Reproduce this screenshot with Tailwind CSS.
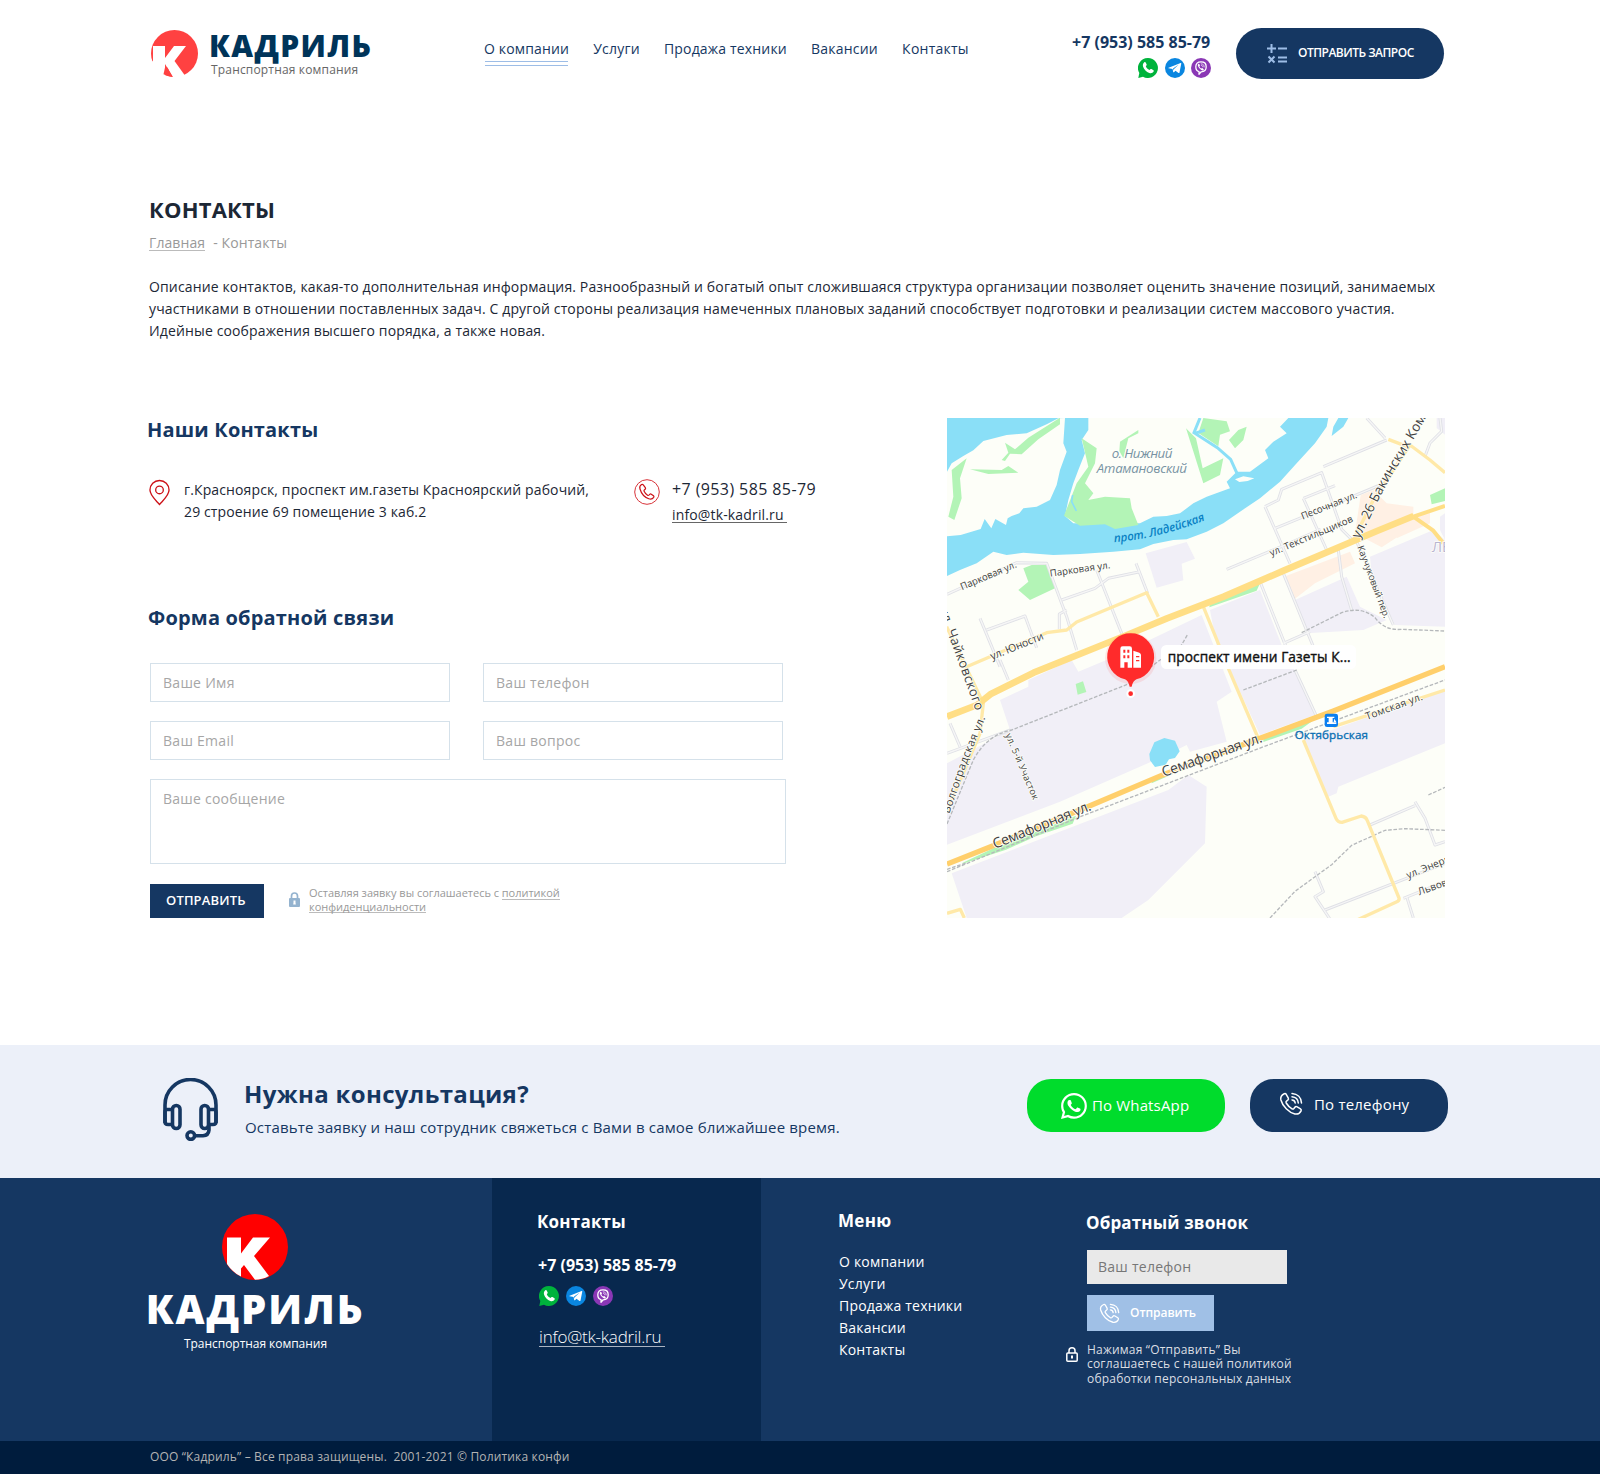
<!DOCTYPE html>
<html lang="ru">
<head>
<meta charset="utf-8">
<title>Кадриль — Контакты</title>
<script src="https://cdn.jsdelivr.net/npm/@tailwindcss/browser@4"></script>
</head>
<body class="bg-white font-['Open_Sans','Noto_Sans',sans-serif] text-[14px] text-[#1c2735]">
<svg class="hidden">
  <defs>
    <symbol id="wa" viewBox="0 0 20 20"><path fill="#00b33c" d="M10 0a10 10 0 1 1-5 18.7L.3 20l1-5A10 10 0 0 1 10 0Z"/><path fill="#fff" d="M6.3 4.2c.5-.4 1-.3 1.3.2l1 1.9c.2.5.1.9-.2 1.2l-.6.7c.7 1.7 1.900 2.900 3.700 3.700l.8-.7c.4-.3.8-.4 1.200-.1l1.900 1.200c.5.3.5.8.2 1.300-1 1.600-2.600 2-4.300 1.400-3-1-5.200-3.200-6.200-6.200-.5-1.800-.2-3.500 1.200-4.600Z"/></symbol>
    <symbol id="tg" viewBox="0 0 20 20"><circle cx="10" cy="10" r="10" fill="#0a86e0"/><path fill="#fff" d="M3.600 9.700 15.600 5c.5-.2.8.1.7.6l-1.800 8.900c-.1.600-.6.700-1 .4l-3-2.200-1.600 1.500c-.3.300-.6.200-.7-.2l-.6-3-3.900-.8c-.5-.1-.5-.4-.1-.5Zm4.500.9.500 2 .4-1.700 4.800-4.300Z"/></symbol>
    <symbol id="vb" viewBox="0 0 20 20"><circle cx="10" cy="10" r="10" fill="#8a37b5"/><path fill="none" stroke="#fff" stroke-width="1.300" stroke-linejoin="round" d="M10 3.800c3.800 0 5.200 1.400 5.200 5s-1.400 5-5 5L8 16.200v-2.600c-2.300-.5-3.200-2-3.200-4.800 0-3.600 1.400-5 5.200-5Z"/><path fill="#fff" d="M7.400 5.900c.5-.3.800 0 1 .4l.5.9c.1.300 0 .6-.5 1 .3 1.200 1 2 2.100 2.400.3-.5.700-.6 1-.4l1 .7c.4.300.4.600.1 1-.6.800-1.400.7-2.300.200a7.200 7.200 0 0 1-3.300-4c-.3-1 0-1.800.4-2.200Z"/><path fill="none" stroke="#fff" stroke-width=".7" stroke-linecap="round" d="M10.200 5.800c1.900.1 3 1.200 3 3.200M10.400 7.300c.9.100 1.300.6 1.400 1.500"/></symbol>
    <symbol id="call" viewBox="0 0 24 24"><g fill="none" stroke="currentColor" stroke-linecap="round" stroke-linejoin="round"><path d="M5.300 1.700C2.500 3 1.200 5 1.900 8c1.600 6 8 12.800 14 14 3 .5 5-.6 6.200-3.100.3-.8.1-1.500-.6-2l-3.300-2.100c-.9-.5-1.700-.4-2.300.4l-1 1.300c-.5.600-1.200.7-1.900.3-2.500-1.500-4.300-3.300-5.800-5.800-.4-.7-.3-1.400.3-1.900l1.300-1c.8-.6.900-1.400.4-2.300L7.200 2.300c-.5-.7-1.200-.9-1.900-.6Z"/><path d="M13 1.500c5.500.3 9.300 4 9.500 9.500M13 4.700c3.700.3 6 2.600 6.300 6.300M13 7.900c2 .2 3 1.200 3.200 3.100"/></g></symbol>
  </defs>
</svg>

<header class="flex h-[186px] items-start pl-[151px]">
  <svg class="mt-[30px] h-[47px] w-[47px]" viewBox="0 0 47 47"><circle cx="23.500" cy="23.500" r="23.500" fill="#ff4141"/><path fill="#fff" d="M2 16h12v12l9-12h12L23.500 31 35 47H22l-8-13v13H0V32l2-1Z"/><path fill="#ff4141" d="M14 37.500 12.500 44.300q4 2.300 9 2.700l-5-9.500Z"/></svg>
  <div class="mt-[30px] ml-[11px] w-[164px] whitespace-nowrap">
    <div class="text-[30px]/[32px] font-extrabold tracking-[1.350px] text-[#003459]">КАДРИЛЬ</div>
    <div class="pl-[2px] text-[12px]/[16px] tracking-[.17px] text-[#666]">Транспортная компания</div>
  </div>
  <nav class="mt-[39px] ml-[111px] flex gap-[24.200px] text-[14px]/[20px] whitespace-nowrap text-[#153762]">
    <a class="flex flex-col"><span class="tracking-[.15px]">О компании</span><i class="mx-px mt-[2px] h-[5px] border-y border-[#9dbde6]"></i></a>
    <a class="tracking-[.2px]">Услуги</a><a class="tracking-[.17px]">Продажа техники</a><a class="tracking-[.2px]">Вакансии</a><a class="tracking-[.25px]">Контакты</a>
  </nav>
  <div class="mt-[32px] ml-auto w-[140px]">
    <div class="text-[16px]/[20px] font-bold whitespace-nowrap text-[#153762]">+7 (953) 585 85-79</div>
    <div class="mt-[6px] mr-px flex justify-end gap-[6.500px]"><svg class="h-5 w-5"><use href="#wa"/></svg><svg class="h-5 w-5"><use href="#tg"/></svg><svg class="h-5 w-5"><use href="#vb"/></svg></div>
  </div>
  <button class="mt-[28px] mr-[156px] ml-[24px] flex h-[51px] w-[208px] items-center rounded-full bg-[#153762] pl-[31px] whitespace-nowrap text-white">
    <svg class="h-5 w-5" viewBox="0 0 20 20" fill="none" stroke="#9dbde6" stroke-width="2"><path d="M0 4.500h9M4.500 0v9M11 4.500h9M1.500 12.500l6 6M7.500 12.500l-6 6M11 13.500h9M11 17.500h9"/></svg>
    <span class="-mt-px ml-[11px] text-[12px]/[18px] font-semibold tracking-[-.51px]">ОТПРАВИТЬ ЗАПРОС</span>
  </button>
</header>

<main class="h-[859px] pl-[147px]">
  <h1 class="pt-[9px] pl-[2px] text-[22px]/[28px] font-bold tracking-[.21px] whitespace-nowrap">КОНТАКТЫ</h1>
  <div class="mt-[10px] flex gap-[8px] pl-[2px] text-[14px]/[20px] tracking-[.1px] whitespace-nowrap text-[#999]"><a class="h-[18px] border-b border-[#bbb]">Главная</a><span>- Контакты</span></div>
  <p class="mt-[23px] pl-[2px] text-[14px]/[22px] tracking-[.137px] whitespace-nowrap">Описание контактов, какая-то дополнительная информация. Разнообразный и богатый опыт сложившаяся структура организации позволяет оценить значение позиций, занимаемых<br>участниками в отношении поставленных задач. С другой стороны реализация намеченных плановых заданий способствует подготовки и реализации систем массового участия.<br>Идейные соображения высшего порядка, а также новая.</p>

  <div class="mt-[76px] flex">
    <section class="w-[800px] whitespace-nowrap">
      <h2 class="text-[20px]/[24px] font-bold tracking-[.18px] text-[#153762]">Наши Контакты</h2>
      <div class="mt-[37px] flex items-start">
        <svg class="ml-[1.500px] h-[27px] w-[21px]" viewBox="0 0 22 27" fill="none" stroke="#cc1117" stroke-width="1.400"><path d="M11 .9A10 10 0 0 0 1 11c0 5.500 5 9.500 10 15 5-5.500 10-9.500 10-15A10 10 0 0 0 11 .9Z"/><circle cx="11" cy="10.800" r="4"/></svg>
        <p class="ml-[14.500px] w-[405px] text-[14px]/[22px] tracking-[.125px]">г.Красноярск, проспект им.газеты Красноярский рабочий,<br>29 строение 69 помещение 3 каб.2</p>
        <svg class="ml-[45px] h-[26px] w-[26px] text-[#cc1117]" viewBox="0 0 26 26"><circle cx="13" cy="13" r="12.300" fill="none" stroke="#d8343a" stroke-width="1"/><path fill="none" stroke="currentColor" stroke-width="1.200" d="M7.600 5.500C5.800 6.600 5.400 8.200 6 10c1.300 4.500 4.500 8.200 8.800 9.800 2 .7 3.800.2 4.900-1.400.4-.7.300-1.200-.2-1.600l-2.200-1.600c-.6-.4-1.100-.4-1.600.1l-.8.900c-.4.400-.8.400-1.300.1-1.500-1-2.700-2.300-3.500-4-.3-.5-.2-.9.200-1.300l.9-.7c.5-.5.500-1 .1-1.600L9.300 5.900c-.4-.6-1-.8-1.700-.4Z"/></svg>
        <div class="ml-[12px]"><div class="text-[16px]/[20px] tracking-[.4px]">+7 (953) 585 85-79</div><a class="mt-[6px] block h-[18px] w-[115px] border-b border-[#666] text-[14px]/[20px] tracking-[.15px]">info@tk-kadril.ru</a></div>
      </div>
      <h2 class="mt-[83px] pl-px text-[20px]/[24px] font-bold tracking-[.19px] text-[#153762]">Форма обратной связи</h2>
      <form class="mt-[33px] ml-[3px] text-[14px]/[20px] text-[#a6a6a6]">
        <div class="grid grid-cols-[300px_300px] gap-x-[33px] gap-y-[19px] tracking-[.28px]">
          <div class="flex h-[39px] items-center border border-[#d5e1ea] pl-[12px]">Ваше Имя</div>
          <div class="flex h-[39px] items-center border border-[#d5e1ea] pl-[12px]">Ваш телефон</div>
          <div class="flex h-[39px] items-center border border-[#d5e1ea] pl-[12px]">Ваш Email</div>
          <div class="flex h-[39px] items-center border border-[#d5e1ea] pl-[12px]">Ваш вопрос</div>
        </div>
        <div class="mt-[19px] h-[85px] w-[636px] border border-[#d5e1ea] pt-[9px] pl-[12px] tracking-[.24px]">Ваше сообщение</div>
        <div class="mt-5 flex items-start">
          <div class="flex h-[34px] w-[114px] items-center bg-[#153762] pb-[2px] pl-[16px] text-[13px]/[20px] font-semibold tracking-[.15px] text-white">ОТПРАВИТЬ</div>
          <svg class="mt-[8px] ml-[25px] h-[15px] w-[11px]" viewBox="0 0 11 15"><path d="M2.500 7V4a3 3 0 0 1 6 0v3" fill="none" stroke="#94b3cf" stroke-width="1.700"/><rect y="6" width="11" height="9" rx="1" fill="#94b3cf"/><path d="M4.500 8.500h2v2l.3 2H4.200l.3-2Z" fill="#fff"/></svg>
          <p class="mt-[2px] ml-[9px] text-[11px]/[14px] tracking-[-.02px] text-[#999]">Оставляя заявку вы соглашаетесь с <a class="inline-block h-[14px] border-b border-[#bbb] align-top">политикой</a><br><a class="inline-block h-[13px] border-b border-[#bbb] align-top">конфиденциальности</a></p>
        </div>
      </form>
    </section>

    <svg class="h-[500px] w-[498px]" viewBox="21 24 1494 1500" font-family="'Open Sans','Noto Sans',sans-serif">
      <rect x="21" y="24" width="1494" height="1500" fill="#fdfef8"/>
      <!-- residential and industrial blocks -->
      <g fill="#f1eff7">
        <path d="M617 430 740 396l25 50-40 15 5 50-80 22Z"/>
        <path d="M810 600 960 540l65 165-180 75-20-100Z"/>
        <path d="M1065 570 1220 500l40 90 80 40-70 30-170 10-25-60Z"/>
        <path d="m1290 440 190-80 35 30v260l-150-5-70-150Z"/>
        <path d="M180 870 265 830v-20l130-60 20 35 120-50 250-120 90 230-45 30 30 120-110 30-10-20-60 30-320 140-340 130V1060l190-100Z"/>
        <path d="m870 780 160-75 95 210-165 60Z"/>
        <path d="m1090 990 425-150v160l-320 130-5 20-25 10Z"/>
        <path d="m35 1390 650-250 60-45 55 35-5 170-170 170-80 54H80Z"/>
        <path d="M1490 24h25v50l-25-20ZM1500 320l15-10v80l-15-30Z"/>
      </g>
      <g fill="#fff0e4"><path d="M1032 500 1230 425l15 35-120 60-65 50Z"/><path d="M1262 255 1300 240l40 40 80 10v60l-95 62-80-42Z"/><path d="m1370 350 100-50v40l-100 45Z"/></g>
      <!-- river and islands -->
      <path fill="#8adff7" d="M21 24h1144l-5 26-35 50-55 60-50 55-60 50-60 40-50 35-50 25-60 23-40 2-60 12-40 16-80 7-100 7-80 3-90-7-50 7-40-10-50 35-50 20-39 18ZM1195 24h30l-15 26-35 28 5-28Z"/>
      <path fill="#fdfef8" d="m21 185 14-25 35-22 30-17 30-28 70-18 60-5 60-27 35-18 20-1-5 76 10 25-20 55-10 45-20 45-40 20-40 5-12 15-23 8-12 7-5 20-32-18-12 28-20-28-12 30-60 18-45 4ZM445 24h600l-25 26 20 20-40 25-25 25 10 25-55 40h-40l-30 30 10 20-70 25-40 20-40 30-40 8-40 2-40 20H400l-25-22 10-48 15-50 15-40 20-50-10-40 20-30ZM885 208l25-9 33 6-20 8-25 3Z"/>
      <g fill="#b3f4b6">
        <path d="m35 180 45-35-20 60 5 60-22 65-18-10 15-60ZM90 178l95 2 20-12 30 20-90 4ZM185 150l20-22-10-30 30 20 40-35 95-60v20l-65 45-50 45-35-2-15 22Z"/>
        <path d="m425 85 45 30-5 45-30 60 25 30-15 20 50-10 75 5 5 30 20 50-70 12-30-14-75 4-48-30 38-97 35-50ZM738 55l30 30 20 90 62-30-10 50-50 25-25-80ZM790 24l70 10 10 30-30 10-5 35-60-40ZM895 60l25-10-10 40-25 25-18-25ZM540 95l55-35v10l-30 15-15 60 10 18-22-40Z"/>
        <path d="m250 475 25-10h45l25 70-75 35-35-30 30-25ZM1470 255l45-20v38l-40 10ZM810 578l150-58-10 22-142 50ZM407 822l22-8 10 32-26 8ZM68 1358l100-47 120-46 120-48-10 24-110 38-90 40-130 42ZM635 1112l60-32-10 18-50 22ZM970 988l165-68-50 36-115 40Z"/>
      </g>
      <path d="M780 24 762 68l70 45 40 35 18 40M795 60l-30 10" fill="none" stroke="#8adff7" stroke-width="9"/>
      <path d="m398 255-3 20 14 28" fill="none" stroke="#8adff7" stroke-width="5"/>
      <path fill="#8adff7" d="m628 1032 15-35 30-13 32 8 14 32-14 20-18 4-10 16-32 7-15-20Z"/>
      <!-- minor streets -->
      <defs><path id="st" d="M21 553 230 458l90 2 60 160 30 100M365 570l100-35 40-30 95-20M470 480l75 190M588 460l35 90M120 625l60 145M140 660l115-42 35 95M380 600l-22 12v45M860 478l180-75 102-45M975 290l75 170M1030 490l90 220M975 290l40-20 10-32 120-50 60 170 30 30M1090 265l70 155M1090 265l95-38M1005 355l160-65 155-65M1150 170l190-80M1250 395l110 250M1195 420l10 80 30 100M1280 24l55 60M1500 24l5 40-35 35-15 40M1065 780l65 140M960 515l80 200M1030 700l80-35M180 750l25 60M30 940l30 70M21 1030l190-70M1290 1245l135-58M1425 1175l30 50 30 80 30-10M1125 1385l25 60-25 15 60 90M1155 1500l360-140M1390 1465l125-50M1400 1460l20 64"/></defs>
      <use href="#st" fill="none" stroke="#dfe0e6" stroke-width="9" stroke-linejoin="round"/>
      <use href="#st" fill="none" stroke="#f6f6f6" stroke-width="4" stroke-linejoin="round"/>
      <!-- rail lines -->
      <g fill="none" stroke="#b5b8bb" stroke-width="4" stroke-dasharray="11 5">
        <path d="M21 1242 100 1050q40-75 115-90L570 820l90-70 50-20 32-55M1085 668l120-60q60-20 100 15 30 40 80 35l130 5M910 840l160-60M21 1385l400-165 550-210 544-200M21 1378l60-20M990 1524l75-80 110-80 60-58 100-45 60-5 120 5M1465 1155l50-23"/>
      </g>
      <!-- avenues -->
      <path fill="none" stroke="#ffe9a8" stroke-width="10" stroke-linejoin="round" d="m80 770 70-30 170-72 60-8 30-24 210-88 35 72M790 590l75 185 92 215M1090 990l98 235q5 12 18 12l58-19q14 2 18 14l95 232q2 8-8 12l-120 55M1180 950l335-110M1240 390l60-120 110-165 60 45 45 38M1345 88l65 25M20 650l110 230-10 90-99 235M21 1510l40-12 12 26"/>
      <g fill="none" stroke="#ffde85" stroke-linejoin="round"><path stroke-width="20" d="m21 920 90-35 40-32 130-65 280-113 120-50 170-65 180-78 280-119 110-45"/><path stroke-width="12" d="m1420 320 60 42 30 38M1420 320l95-32"/></g>
      <path fill="none" stroke="#ffcf6b" stroke-width="16" d="m21 1362 144-57 285-118 220-93 290-109 220-82 335-133"/>
      <!-- place names -->
      <g fill="#404040" stroke="#fdfef8" stroke-width="5" paint-order="stroke" stroke-linejoin="round" font-size="29">
        <g fill="#7893a3" font-style="italic" font-size="40"><text x="515" y="143" textLength="182">о. Нижний</text><text x="470" y="188" textLength="271">Атамановский</text></g>
        <path id="rv" d="M523 397Q660 385 802 328" fill="none" stroke="none"/>
        <text fill="#0b82c4" stroke="#8adff7" font-style="italic" font-weight="600" font-size="35"><textPath href="#rv" textLength="282">прот. Ладейская</textPath></text>
        <text transform="translate(1088 329) rotate(-22)" textLength="178">Песочная ул.</text>
        <text transform="translate(994 439) rotate(-23)" textLength="268">ул. Текстильщиков</text>
        <path id="bk" d="M1258 388 1300 303Q1335 225 1395 132L1490-30" fill="none" stroke="none"/>
        <text font-size="40"><textPath href="#bk" textLength="462">ул. 26 Бакинских Комис</textPath></text>
        <text transform="translate(1252 411) rotate(69.500)" textLength="230" font-size="28">Каучуковый пер.</text>
        <text transform="translate(66 541) rotate(-23)" textLength="180">Парковая ул.</text>
        <text transform="translate(331 500) rotate(-8)" textLength="182">Парковая ул.</text>
        <text transform="translate(156 750) rotate(-22)" textLength="169" font-size="32">ул. Юности</text>
        <path id="ch" d="M-3 598 58 765 112 915" fill="none" stroke="none"/>
        <text font-size="39"><textPath href="#ch" textLength="325">ул. Чайковского</textPath></text>
        <path id="vg" d="M28 1212 85 1047 138 919" fill="none" stroke="none"/>
        <text font-size="33"><textPath href="#vg" textLength="308">Волгоградская ул.</textPath></text>
        <text transform="translate(196 975) rotate(67)" textLength="213" font-size="28">ул. 5-й Участок</text>
        <text transform="translate(671 1101) rotate(-19.500)" textLength="316" font-size="43">Семафорная ул.</text>
        <text transform="translate(165 1317) rotate(-22)" textLength="314" font-size="43">Семафорная ул.</text>
        <text transform="translate(1281 930) rotate(-20)" textLength="180" font-size="31">Томская ул.</text>
        <text transform="translate(1404 1406) rotate(-22)" font-size="30">ул. Энерг</text>
        <text transform="translate(1438 1456) rotate(-20)" font-size="30">Львово</text>
        <text x="1475" y="425" font-size="44" fill="#b9b4d2">ЛЕ</text>
        <text x="1064" y="986" font-size="35" stroke="#0b6fb3" stroke-width="1" fill="#0b6fb3" textLength="220">Октябрьская</text>
      </g>
      <rect x="1154" y="911" width="40" height="40" rx="7" fill="#0a7ff0"/>
      <path d="M1161 920h22v4h-5v13h11v5h-28v-5h5v-13h-5ZM1183 926l6 10h-8Z" fill="#fff"/>
      <!-- office marker -->
      <circle cx="572" cy="745" r="77" fill="#ff2b2b" opacity=".1"/>
      <path fill="#ff2b2b" d="M572 670a70 70 0 0 1 17 138q-10 4-14 22h-6q-4-18-14-22a70 70 0 0 1 17-138Z"/>
      <circle cx="572" cy="851" r="13" fill="#fff"/><circle cx="572" cy="851" r="7" fill="#ff2b2b"/>
      <path fill="#fff" fill-rule="evenodd" d="M541 716q0-7 7-7h21q7 0 7 7v57h-13v-16h-10v16h-12Zm9 3v9h6v-9Zm12 0v9h6v-9Zm-12 17v9h6v-9Zm12 0v9h6v-9ZM580 722l18 6q5 2 5 7v38h-23Zm8 16v4h10v-4Zm0 12v4h10v-4Z"/>
      <rect x="663" y="705" width="585" height="72" rx="16" fill="#fff"/>
      <text x="683" y="756" font-size="41" fill="#111" stroke="#111" stroke-width="1.200" textLength="549">проспект имени Газеты К...</text>
    </svg>
  </div>
</main>

<section class="flex h-[133px] items-start bg-[#ecf0f9] pl-[163px] whitespace-nowrap text-[#153762]">
  <svg class="mt-[33px] h-[63px] w-[55px]" viewBox="0 0 55 63" fill="none" stroke="#153762" stroke-width="3.600"><path d="M2 45V27a25.500 25.500 0 0 1 51 0v18"/><rect x="9.500" y="27.500" width="7.500" height="23" rx="3.700"/><rect x="38" y="27.500" width="7.500" height="23" rx="3.700"/><path d="M9 31.500H4q-2 0-2 3v9q0 3 3 3h4M46 31.500h5q2 0 2 3v9q0 3-3 3h-4M46 48v4q-.5 5.500-6 5.800h-8"/><circle cx="27.800" cy="57.600" r="3.800"/></svg>
  <div class="mt-[34px] ml-[27px]">
    <h2 class="-ml-px text-[24px]/[30px] font-bold tracking-[.33px]">Нужна консультация?</h2>
    <p class="mt-[8px] text-[15px]/[20px] tracking-[.165px]">Оставьте заявку и наш сотрудник свяжеться с Вами в самое ближайшее время.</p>
  </div>
  <div class="mt-[34px] mr-[152px] ml-auto flex gap-[25px] text-[15px]/[20px] text-white">
    <button class="flex h-[53px] w-[198px] items-center rounded-[24px] bg-[#00dc2c] pl-[34px]">
      <svg class="h-[26px] w-[26px]" viewBox="0 0 16 16" fill="#fff"><path d="M13.601 2.326A7.850 7.850 0 0 0 7.994 0C3.627 0 .068 3.558.064 7.926c0 1.399.366 2.760 1.057 3.965L0 16l4.204-1.102a7.900 7.900 0 0 0 3.790.965h.004c4.368 0 7.926-3.558 7.930-7.930A7.900 7.900 0 0 0 13.600 2.326zM7.994 14.521a6.600 6.600 0 0 1-3.356-.92l-.24-.144-2.494.654.666-2.433-.156-.251a6.560 6.560 0 0 1-1.007-3.505c0-3.626 2.957-6.584 6.591-6.584a6.560 6.560 0 0 1 4.660 1.931 6.560 6.560 0 0 1 1.928 4.660c-.004 3.639-2.961 6.592-6.592 6.592m3.615-4.934c-.197-.099-1.170-.578-1.353-.646-.182-.065-.315-.099-.445.099-.133.197-.513.646-.627.775-.114.133-.232.148-.43.050-.197-.1-.836-.308-1.592-.985-.59-.525-.985-1.175-1.103-1.372-.114-.198-.011-.304.088-.403.087-.088.197-.232.296-.346.100-.114.133-.198.198-.33.065-.134.034-.248-.015-.347-.05-.099-.445-1.076-.612-1.470-.16-.389-.323-.335-.445-.34-.114-.007-.247-.007-.38-.007a.73.730 0 0 0-.529.247c-.182.198-.691.677-.691 1.654s.710 1.916.810 2.049c.098.133 1.394 2.132 3.383 2.992.470.205.840.326 1.129.418.475.152.904.129 1.246.080.380-.058 1.171-.48 1.338-.943.164-.464.164-.86.114-.943-.049-.084-.182-.133-.38-.232"/></svg>
      <span class="-mt-[2px] ml-[5px] tracking-[.15px]">По WhatsApp</span>
    </button>
    <button class="flex h-[53px] w-[198px] items-center rounded-[24px] bg-[#153762] pl-[29px]">
      <svg class="-mt-[3px] h-[24px] w-[24px] stroke-[1.500]"><use href="#call"/></svg>
      <span class="-mt-[4px] ml-[11px] tracking-[.2px]">По телефону</span>
    </button>
  </div>
</section>

<footer class="whitespace-nowrap text-white">
  <div class="flex h-[263px] items-start bg-[#153762]">
    <div class="flex w-[492px] flex-col items-center pt-[36px] pl-[18px]">
      <svg class="h-[66px] w-[66px]" viewBox="0 0 66 66"><circle cx="33" cy="33" r="33" fill="#f00"/><path fill="#fff" d="M5 23.500h14v16l12-16h17L32 42l15 20q-7 3.800-14 3.800L22 51l-3 3.500v8Q10 58 5 50Z"/></svg>
      <div class="mt-[5px] text-[40px]/[48px] font-extrabold tracking-[2px]">КАДРИЛЬ</div>
      <div class="mt-[3px] pl-px text-[12px]/[16px] tracking-[-.04px]">Транспортная компания</div>
    </div>
    <div class="h-full w-[269px] bg-[#08284e] pt-[32px] pl-[45px]">
      <h3 class="text-[17px]/[24px] font-bold tracking-[.2px]">Контакты</h3>
      <div class="mt-[20px] pl-px text-[16px]/[22px] font-bold">+7 (953) 585 85-79</div>
      <div class="mt-[10px] flex gap-[7px] pl-[2px]"><svg class="h-5 w-5"><use href="#wa"/></svg><svg class="h-5 w-5"><use href="#tg"/></svg><svg class="h-5 w-5"><use href="#vb"/></svg></div>
      <a class="mt-[19px] ml-[2px] block h-[22px] w-[126px] border-b border-[#aab4c2] text-[17px]/[24px] font-light tracking-[-.2px]">info@tk-kadril.ru</a>
    </div>
    <div class="w-[246px] pt-[31px] pl-[77px]">
      <h3 class="text-[17px]/[24px] font-bold tracking-[.3px]">Меню</h3>
      <ul class="mt-[18px] pl-px text-[14px]/[22px] tracking-[.2px]"><li>О компании</li><li>Услуги</li><li>Продажа техники</li><li>Вакансии</li><li>Контакты</li></ul>
    </div>
    <div class="pt-[33px] pl-[80px]">
      <h3 class="-ml-px text-[17px]/[24px] font-bold tracking-[.15px]">Обратный звонок</h3>
      <div class="mt-[15px] flex h-[34px] w-[200px] items-center bg-[#e9e9e9] pl-[11px] text-[14px]/[20px] tracking-[.26px] text-[#777]">Ваш телефон</div>
      <button class="mt-[11px] flex h-[36px] w-[127px] items-center bg-[#a0c0e6] pl-[12px] text-[12px]/[18px] font-semibold"><svg class="h-[21px] w-[21px] stroke-[1.500]"><use href="#call"/></svg><span class="ml-[10px] tracking-[-.05px]">Отправить</span></button>
      <div class="mt-[12px] -ml-[21px] flex items-start">
        <svg class="mt-[4px] h-[15px] w-[12px]" viewBox="0 0 12 15" fill="none" stroke="#fff" stroke-width="1.500"><path d="M3 6V3.800a3 3 0 0 1 6 0V6"/><rect x=".8" y="6" width="10.400" height="8.200" rx="1"/><path d="M6 8.500v3" stroke-width="2"/></svg>
        <p class="ml-[9px] text-[12px]/[14.400px] tracking-[.2px] text-[#dcdfe4]">Нажимая “Отправить” Вы<br>соглашаетесь с нашей политикой<br>обработки персональных данных</p>
      </div>
    </div>
  </div>
  <div class="h-[33px] bg-[#001c3d] pt-[6px] pl-[150px] text-[12px]/[20px] tracking-[.16px] text-[#b4b4b4]">ООО “Кадриль” – Все права защищены. &nbsp;2001-2021 © Политика конфи</div>
</footer>
</body>
</html>
